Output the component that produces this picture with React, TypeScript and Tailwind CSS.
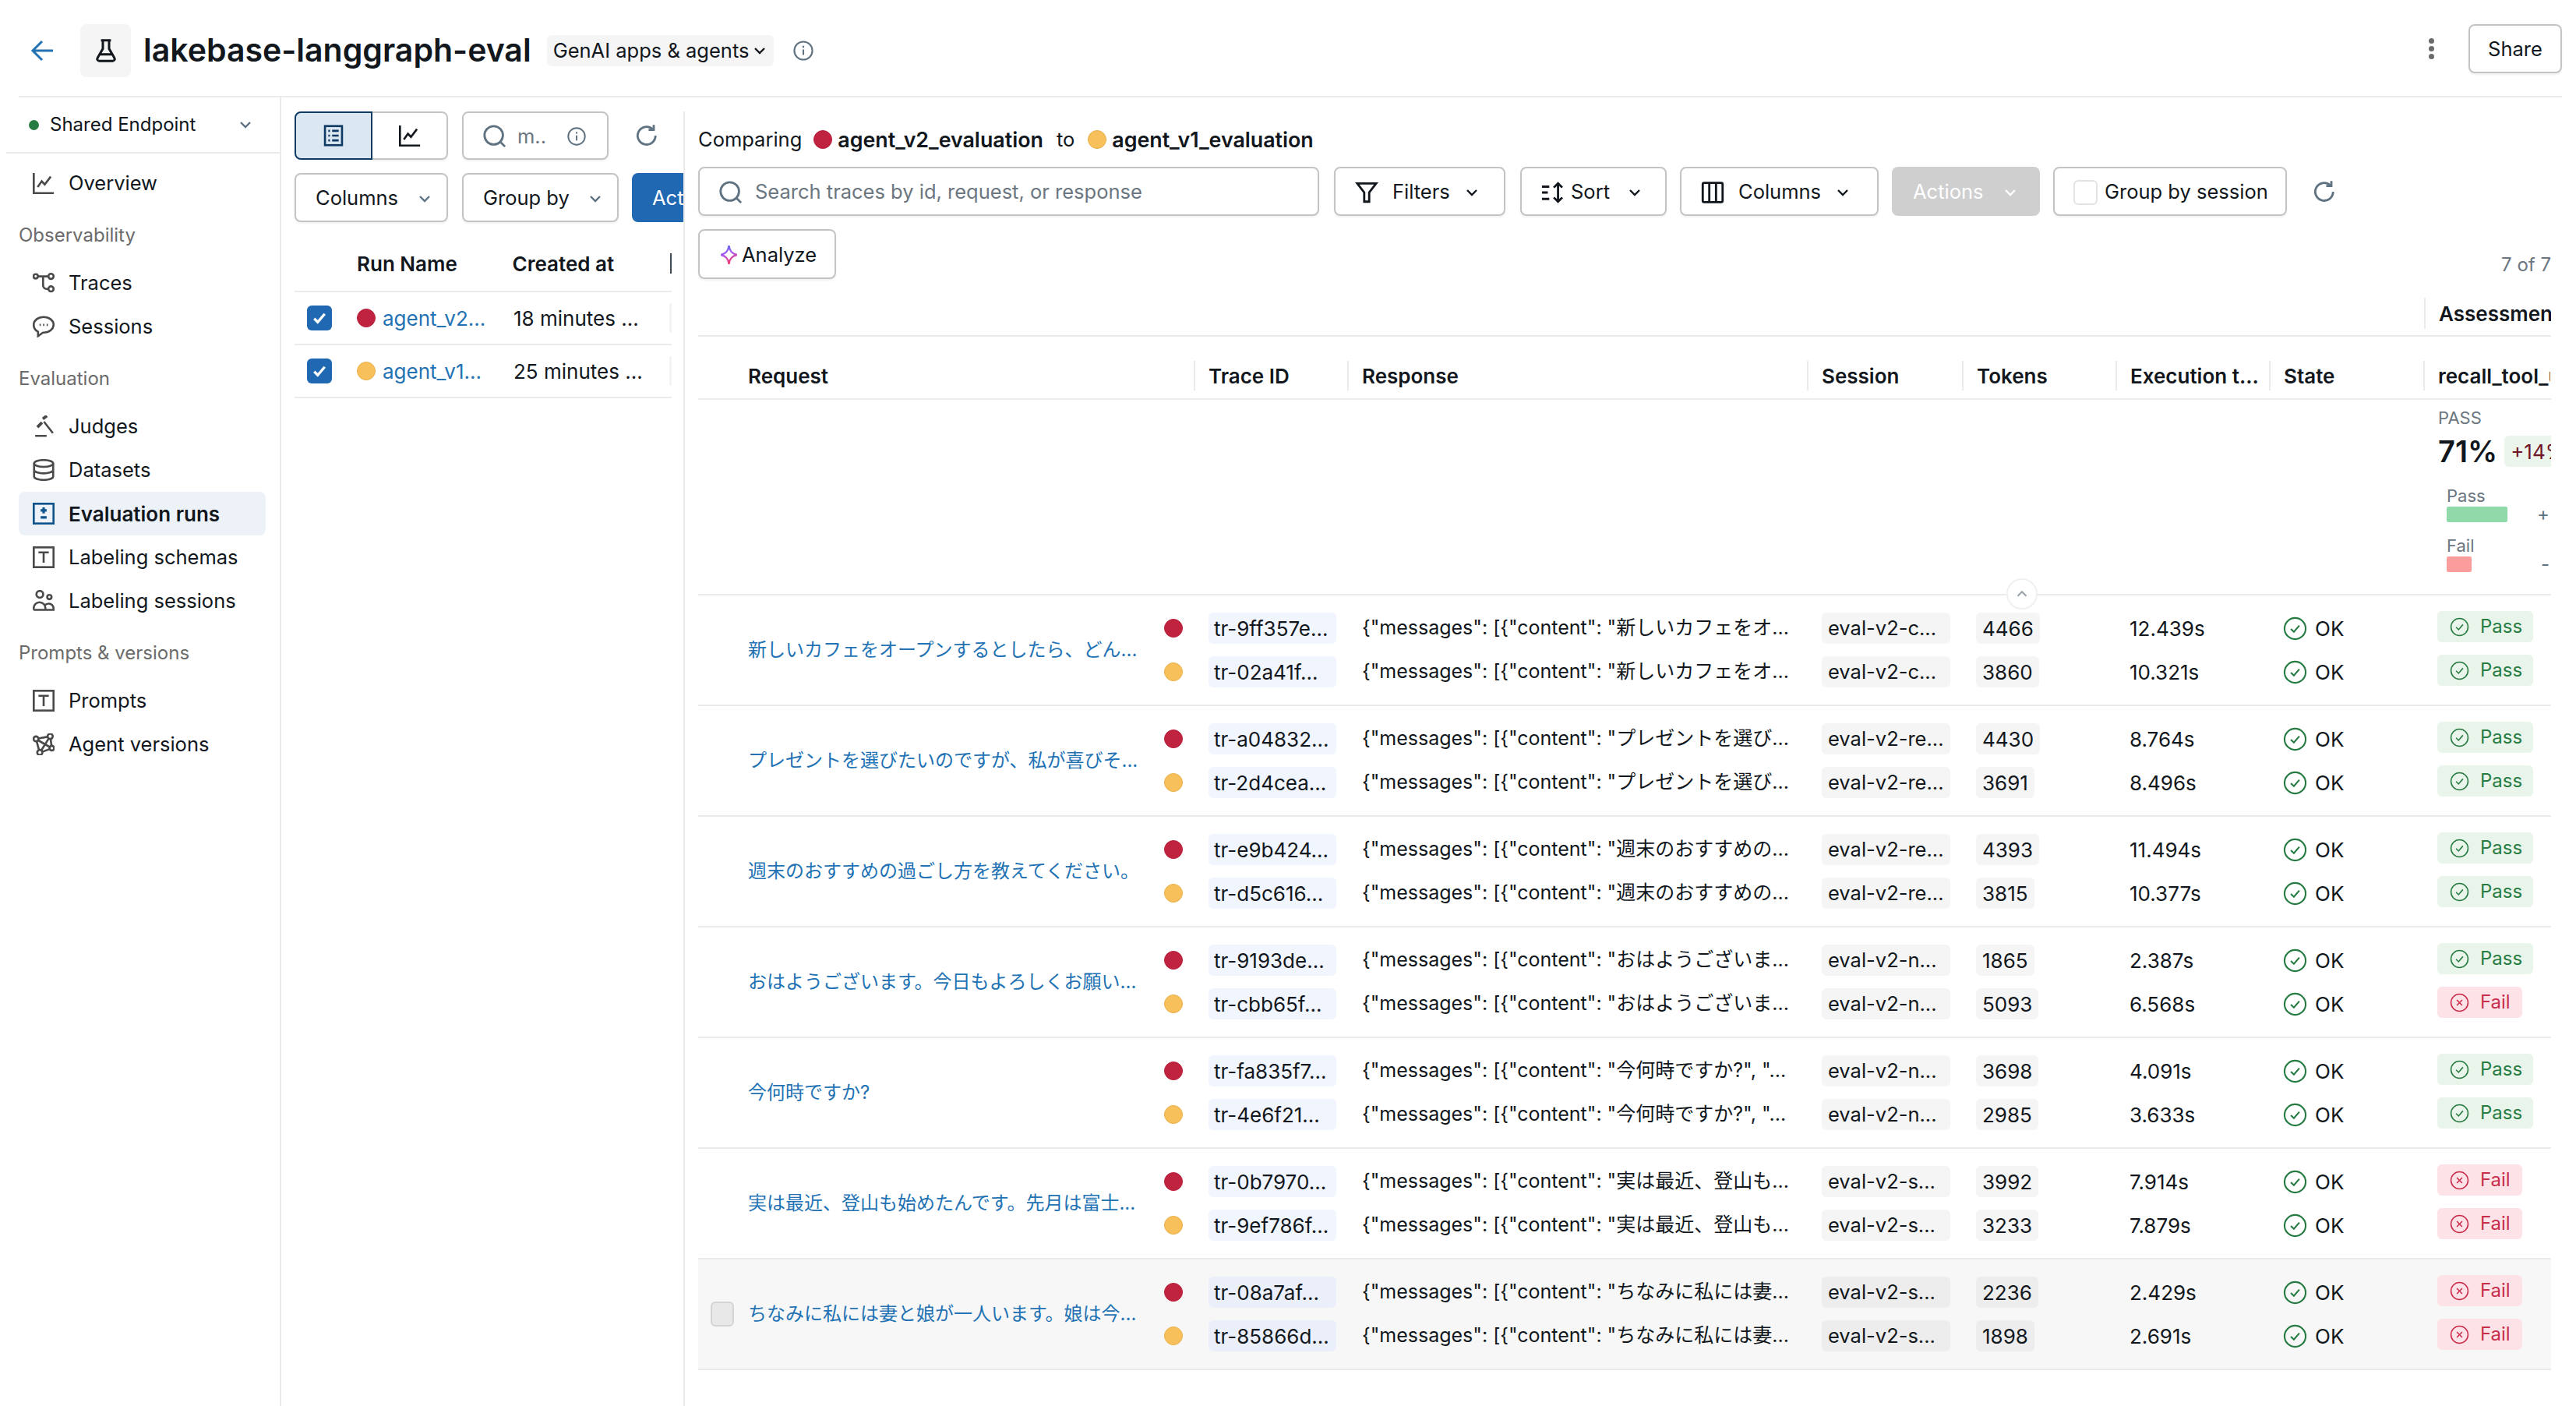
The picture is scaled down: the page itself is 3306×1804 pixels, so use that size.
import { ReactNode } from "react";

const RED = "bg-[#c0233f] border border-[#b81f3b]";
const YEL = "bg-[#f8c05a] border border-[#e9b04c]";

const Ic = ({ size = 28, className = "", sw = 1.5, children }: { size?: number; className?: string; sw?: number; children: ReactNode }) => (
  <svg width={size} height={size} viewBox="0 0 16 16" fill="none" stroke="currentColor" strokeWidth={sw} className={"shrink-0 " + className}>
    {children}
  </svg>
);

const Chevron = ({ className = "" }: { className?: string }) => (
  <Ic size={24} sw={1.6} className={className}><path d="M4 6l4 4 4-4" /></Ic>
);
const SearchI = ({ size = 28 }: { size?: number }) => (
  <Ic size={size} className="text-[#5f7281]"><circle cx="7.25" cy="7.25" r="6.3" /><path d="M11.6 11.6l3.4 3.4" /></Ic>
);
const Refresh = () => (
  <Ic size={30} className="text-[#5f7281]"><path d="M14 8a6.1 6.1 0 1 1-2-4.5" /><path d="M12.8 0.6v3.5H9.3" /></Ic>
);
const ChartI = ({ size = 28 }: { size?: number }) => (
  <Ic size={size}><path d="M.75 .5v14.75H15.5" /><path d="M3.6 10.8l3-4.2 2.2 2.4 4.4-5.8" /></Ic>
);
const TBox = () => (
  <Ic><rect x=".75" y=".75" width="14.5" height="14.5" /><path d="M4.2 4.4h7.6M8 4.4v7.6" /></Ic>
);

const navIcons: Record<string, ReactNode> = {
  Overview: <ChartI />,
  Traces: (
    <Ic>
      <circle cx="2.2" cy="3.2" r="1.6" /><circle cx="13.4" cy="3.2" r="1.9" /><circle cx="13.4" cy="12.4" r="1.9" />
      <path d="M3.8 3.2h7.7M7.6 3.2v6.7a2.5 2.5 0 0 0 2.5 2.5h1.4" />
    </Ic>
  ),
  Sessions: (
    <Ic>
      <path d="M8 1c4.1 0 7.3 2.5 7.3 5.7S12.1 12.4 8 12.4h-.5L3.9 15v-3.2C1.9 10.8.7 8.9.7 6.7.7 3.5 3.9 1 8 1z" />
      <path d="M5 6.8h.9M7.6 6.8h.9M10.2 6.8h.9" />
    </Ic>
  ),
  Judges: (
    <Ic>
      <path d="M3.4 8.6l3.4-3.4M7.4 2.6l3-2.3" strokeWidth="2.2" />
      <path d="M8.2 4.6l6.6 8.4M1.8 15h8.4" />
    </Ic>
  ),
  Datasets: (
    <Ic>
      <ellipse cx="8" cy="3.2" rx="7" ry="2.5" />
      <path d="M1 3.2v9.6c0 1.3 3.1 2.5 7 2.5s7-1.2 7-2.5V3.2M1 8c0 1.3 3.1 2.5 7 2.5s7-1.2 7-2.5" />
    </Ic>
  ),
  "Evaluation runs": (
    <Ic className="text-[#0e538b]">
      <rect x=".75" y=".75" width="14.5" height="14.5" />
      <path d="M8 3.4v4.4M5.8 5.6h4.4M5.8 10.8h4.4" strokeWidth="1.8" />
    </Ic>
  ),
  "Labeling schemas": <TBox />,
  "Labeling sessions": (
    <Ic>
      <circle cx="5.2" cy="3.2" r="2.5" /><circle cx="12.2" cy="5.2" r="1.6" />
      <path d="M.7 14.6v-1.2C.7 10.8 2.7 9 5 9s4.3 1.8 4.3 4.4v1.2M.7 14.6h14.6v-.9c0-2-1.5-3.7-3.5-3.7-.9 0-1.7.3-2.5.8" />
    </Ic>
  ),
  Prompts: <TBox />,
  "Agent versions": (
    <Ic>
      <circle cx="2.4" cy="4" r="1.8" /><circle cx="12.8" cy="2.2" r="1.9" /><circle cx="14" cy="10.8" r="1.7" /><circle cx="5.2" cy="14" r="1.9" />
      <path d="M4.1 3.7l6.8-1.2M2.9 5.8l1.7 6.4M11.7 3.8l-5.4 8.6M13.1 4.1l.7 5M3.9 5l8.6 5M12.4 11.5l-5.4 2" />
    </Ic>
  ),
};

const groups = [
  { label: "Observability", items: ["Traces", "Sessions"] },
  { label: "Evaluation", items: ["Judges", "Datasets", "Evaluation runs", "Labeling schemas", "Labeling sessions"] },
  { label: "Prompts & versions", items: ["Prompts", "Agent versions"] },
];

const NavItem = ({ name }: { name: string }) => {
  const active = name === "Evaluation runs";
  return (
    <div className={"ml-[24px] mr-[18px] h-[56px] pl-[18px] flex items-center gap-[18px] rounded-[8px] text-[#4a4a4a] " + (active ? "bg-[#edf2f8]" : "")}>
      {navIcons[name]}
      <span className={"text-[#11171c] " + (active ? "text-[26px] font-semibold" : "text-[25.5px]")}>{name}</span>
    </div>
  );
};

const Sidebar = () => (
  <aside className="w-[361px] shrink-0 border-r-2 border-[#ebebeb]">
    <div className="h-[72px] ml-[8px] border-b-2 border-[#ebebeb] pl-[29px] pr-[32px] flex items-center">
      <span className="w-[13px] h-[13px] rounded-full bg-[#277c43]" />
      <span className="ml-[14px] text-[24px] text-[#11171c] flex-1">Shared Endpoint</span>
      <Chevron className="text-[#5f7281]" />
    </div>
    <div className="mt-[10px]"><NavItem name="Overview" /></div>
    {groups.map((g) => (
      <div key={g.label} className="mt-[17px]">
        <div className="h-[44px] pl-[24px] flex items-center text-[24px] text-[#6b6b6b]">{g.label}</div>
        <div className="mt-[11px]">
          {g.items.map((n) => <NavItem key={n} name={n} />)}
        </div>
      </div>
    ))}
  </aside>
);

const btn = "shrink-0 h-[63px] pt-[2px] rounded-[8px] border-2 border-[#c4c4c4] shadow-[0_2px_3px_rgba(0,0,0,0.06)] bg-white flex items-center text-[25.5px] text-[#11171c]";

const RunRow = ({ color, name, at }: { color: string; name: string; at: string }) => (
  <div className="h-[68px] border-b-2 border-[#ebebeb] flex items-center">
    <div className="ml-[16px] w-[32px] h-[32px] rounded-[6px] bg-[#2068b2] flex items-center justify-center text-white">
      <Ic size={24} sw={2.2}><path d="M3.5 8.5l3 3 6-7" /></Ic>
    </div>
    <span className={"ml-[32px] w-[24px] h-[24px] rounded-full " + color} />
    <span className="ml-[9px] w-[168px] text-[26px] text-[#2272b4]">{name}</span>
    <span className="text-[26px] text-[#11171c]">{at}</span>
    <span className="ml-auto w-[3px] h-[38px] rounded-l-[3px] bg-[#f3f3f3]" />
  </div>
);

const RunsPanel = () => (
  <div className="w-[518px] shrink-0 mt-[18px] border-r-2 border-[#ebebeb] overflow-hidden pl-[17px]">
    <div className="flex items-center">
      <div className="flex w-[197px] h-[62px] shrink-0">
        <div className="w-[100px] rounded-l-[8px] border-2 border-[#0e3a64] bg-[#dbe7f1] flex items-center justify-center text-[#0e3a64]">
          <Ic>
            <rect x="1.75" y="1" width="12.5" height="14" />
            <path d="M4.2 4.5h1.2M7 4.5h4.8M4.2 8h1.2M7 8h4.8M4.2 11.5h1.2M7 11.5h4.8" />
          </Ic>
        </div>
        <div className="flex-1 rounded-r-[8px] border-2 border-l-0 border-[#c4c4c4] shadow-[0_2px_3px_rgba(0,0,0,0.06)] flex items-center justify-center text-[#11171c]">
          <ChartI />
        </div>
      </div>
      <div className={btn + " ml-[18px] w-[188px] !h-[62px] pl-[25px]"}>
        <SearchI size={30} />
        <span className="ml-[14px] text-[#6b7680]">m..</span>
        <Ic size={26} sw={1.2} className="ml-[26px] text-[#5f7281]"><circle cx="8" cy="8" r="6.6" /><path d="M8 7.2v4M8 4.4v1.4" /></Ic>
      </div>
      <div className="ml-[34px]"><Refresh /></div>
    </div>
    <div className="flex mt-[17px]">
      <div className={btn + " w-[197px] pl-[25px] justify-between pr-[16px]"}>Columns<Chevron className="text-[#5f7281]" /></div>
      <div className={btn + " ml-[18px] w-[201px] pl-[25px] justify-between pr-[16px]"}>Group by<Chevron className="text-[#5f7281]" /></div>
      <div className="ml-[17px] h-[63px] w-[120px] shrink-0 rounded-[8px] bg-[#2068b2] pl-[26px] pt-[2px] flex items-center text-[25.5px] text-white whitespace-nowrap">Actions</div>
    </div>
    <div className="w-[484px] h-[90px] border-b-2 border-[#ebebeb] flex items-center pt-[18px] text-[26px] font-semibold text-[#11171c]">
      <span className="ml-[80px] w-[200px]">Run Name</span>
      <span className="w-[203px]">Created at</span>
      <span className="w-[2px] h-[26px] bg-[#3f4a52]" />
    </div>
    <div className="w-[484px]">
      <RunRow color={RED} name="agent_v2..." at="18 minutes ..." />
      <RunRow color={YEL} name="agent_v1..." at="25 minutes ..." />
    </div>
  </div>
);

type Sub = { id: string; tokens: string; time: string; pass: boolean };
type Row = { request: string; response: string; session: string; hover?: boolean; subs: [Sub, Sub] };

const rows: Row[] = [
  { request: "新しいカフェをオープンするとしたら、どん...", response: '{"messages": [{"content": "新しいカフェをオ...', session: "eval-v2-c...", subs: [
    { id: "tr-9ff357e...", tokens: "4466", time: "12.439s", pass: true },
    { id: "tr-02a41f...", tokens: "3860", time: "10.321s", pass: true } ] },
  { request: "プレゼントを選びたいのですが、私が喜びそ...", response: '{"messages": [{"content": "プレゼントを選び...', session: "eval-v2-re...", subs: [
    { id: "tr-a04832...", tokens: "4430", time: "8.764s", pass: true },
    { id: "tr-2d4cea...", tokens: "3691", time: "8.496s", pass: true } ] },
  { request: "週末のおすすめの過ごし方を教えてください。", response: '{"messages": [{"content": "週末のおすすめの...', session: "eval-v2-re...", subs: [
    { id: "tr-e9b424...", tokens: "4393", time: "11.494s", pass: true },
    { id: "tr-d5c616...", tokens: "3815", time: "10.377s", pass: true } ] },
  { request: "おはようございます。今日もよろしくお願い...", response: '{"messages": [{"content": "おはようございま...', session: "eval-v2-n...", subs: [
    { id: "tr-9193de...", tokens: "1865", time: "2.387s", pass: true },
    { id: "tr-cbb65f...", tokens: "5093", time: "6.568s", pass: false } ] },
  { request: "今何時ですか?", response: '{"messages": [{"content": "今何時ですか?", "...', session: "eval-v2-n...", subs: [
    { id: "tr-fa835f7...", tokens: "3698", time: "4.091s", pass: true },
    { id: "tr-4e6f21...", tokens: "2985", time: "3.633s", pass: true } ] },
  { request: "実は最近、登山も始めたんです。先月は富士...", response: '{"messages": [{"content": "実は最近、登山も...', session: "eval-v2-s...", subs: [
    { id: "tr-0b7970...", tokens: "3992", time: "7.914s", pass: false },
    { id: "tr-9ef786f...", tokens: "3233", time: "7.879s", pass: false } ] },
  { request: "ちなみに私には妻と娘が一人います。娘は今...", response: '{"messages": [{"content": "ちなみに私には妻...', session: "eval-v2-s...", hover: true, subs: [
    { id: "tr-08a7af...", tokens: "2236", time: "2.429s", pass: false },
    { id: "tr-85866d...", tokens: "1898", time: "2.691s", pass: false } ] },
];

const headers = [
  { t: "Request", w: "w-[636px] pl-[64px]" },
  { t: "Trace ID", w: "w-[197px] pl-[17px] border-l-2" },
  { t: "Response", w: "w-[590px] pl-[17px] border-l-2" },
  { t: "Session", w: "w-[199px] pl-[17px] border-l-2" },
  { t: "Tokens", w: "w-[197px] pl-[17px] border-l-2" },
  { t: "Execution t...", w: "w-[197px] pl-[17px] border-l-2" },
  { t: "State", w: "w-[198px] pl-[17px] border-l-2" },
  { t: "recall_tool_use", w: "w-[163px] pl-[17px] border-l-2" },
];

const SubRow = ({ sub, color, row }: { sub: Sub; color: string; row: Row }) => (
  <div className="h-[40px] grid grid-cols-[57px_197px_590px_198px_197px_197px_198px_145px] items-center text-[26px] text-[#11171c]">
    <span className={"w-[24px] h-[24px] rounded-full " + color} />
    <span className={"w-[164px] h-[40px] rounded-[6px] pl-[7px] flex items-center " + (row.hover ? "bg-[#ebeffa]" : "bg-[#f1f5fd]")}>{sub.id}</span>
    <span className="whitespace-nowrap text-[25px]">{row.response}</span>
    <span className={"w-[165px] h-[40px] rounded-[6px] pl-[8px] flex items-center text-[25.5px] " + (row.hover ? "bg-[#ededed]" : "bg-[#f5f5f5]")}>{row.session}</span>
    <span className={"justify-self-start h-[40px] rounded-[6px] px-[8px] flex items-center " + (row.hover ? "bg-[#ededed]" : "bg-[#f5f5f5]")}>{sub.tokens}</span>
    <span>{sub.time}</span>
    <span className="flex items-center">
      <Ic size={31} sw={1.1} className="text-[#277c43]"><circle cx="8" cy="8" r="7" /><path d="M5.2 8.2l2 2 3.6-4.2" /></Ic>
      <span className="ml-[10px]">OK</span>
    </span>
    {sub.pass ? (
      <span className="w-[123px] h-[40px] -mt-[4px] rounded-[6px] bg-[#e9f5ea] text-[#277c43] pl-[16px] flex items-center text-[24px]">
        <Ic size={25} sw={1}><circle cx="8" cy="8" r="7" /><path d="M5.2 8.2l2 2 3.6-4.2" /></Ic>
        <span className="ml-[14px]">Pass</span>
      </span>
    ) : (
      <span className="w-[109px] h-[40px] -mt-[4px] rounded-[6px] bg-[#fde3e7] text-[#c82d4c] pl-[16px] flex items-center text-[24px]">
        <Ic size={25} sw={1}><circle cx="8" cy="8" r="7" /><path d="M5.8 5.8l4.4 4.4M10.2 5.8l-4.4 4.4" /></Ic>
        <span className="ml-[14px]">Fail</span>
      </span>
    )}
  </div>
);

const TableRow = ({ row }: { row: Row }) => (
  <div className={"h-[142px] border-b-2 border-[#ebebeb] flex items-center " + (row.hover ? "bg-[#f7f7f7]" : "")}>
    <div className="w-[598px] shrink-0 flex items-center">
      <span className={"ml-[16px] w-[30px] h-[32px] rounded-[6px] border-2 " + (row.hover ? "border-[#d4d4d4] bg-[#e8e8e8]" : "border-transparent")} />
      <span className="ml-[18px] text-[24px] text-[#2272b4] whitespace-nowrap">{row.request}</span>
    </div>
    <div className="flex flex-col gap-[16px]">
      <SubRow sub={row.subs[0]} color={RED} row={row} />
      <SubRow sub={row.subs[1]} color={YEL} row={row} />
    </div>
  </div>
);

const Summary = () => (
  <div className="relative h-[251px] border-b-2 border-[#ebebeb] flex justify-end">
    <div className="w-[163px] pl-[18px] pt-[10px] overflow-hidden">
      <div className="h-[26px] text-[22px] leading-[26px] text-[#6b7680]">PASS</div>
      <div className="flex items-center mt-[10px] h-[40px]">
        <span className="text-[38px] font-semibold text-[#11171c]">71%</span>
        <span className="ml-[9px] h-[40px] pl-[8px] w-[70px] shrink-0 rounded-[6px] bg-[#ecf5ec] text-[26px] text-[#6e1527] flex items-center">+14%</span>
      </div>
      <div className="ml-[11px] mt-[24px] pr-[2px]">
        <div className="text-[22px] leading-[26px] text-[#6b7680]">Pass</div>
        <div className="flex justify-between items-center h-[20px] mt-[1px]">
          <span className="w-[78px] h-[20px] rounded-[2px] bg-[#8fdaa8]" />
          <span className="text-[24px] text-[#5f7281]">+</span>
        </div>
        <div className="mt-[17px] text-[22px] leading-[26px] text-[#6b7680]">Fail</div>
        <div className="flex justify-between items-center h-[20px] mt-[1px]">
          <span className="w-[32px] h-[20px] rounded-[2px] bg-[#fb9d9d]" />
          <span className="text-[24px] text-[#5f7281]">-</span>
        </div>
      </div>
    </div>
    <div className="absolute left-[1679px] -bottom-[20px] w-[40px] h-[40px] rounded-full bg-white border-2 border-[#f0f0f0] flex items-center justify-center text-[#9aa5ad]">
      <Ic size={22} sw={1.6}><path d="M4 10l4-4 4 4" /></Ic>
    </div>
  </div>
);

const TracesPanel = () => (
  <div className="flex-1 min-w-0 pl-[17px] pr-[32px] pt-[36px]">
    <div className="h-[36px] flex items-center text-[25.5px] text-[#11171c] whitespace-nowrap">
      Comparing
      <span className={"ml-[15px] w-[24px] h-[24px] rounded-full " + RED} />
      <span className="ml-[7px] text-[26.8px] font-semibold">agent_v2_evaluation</span>
      <span className="ml-[17px]">to</span>
      <span className={"ml-[17px] w-[24px] h-[24px] rounded-full " + YEL} />
      <span className="ml-[7px] text-[26.8px] font-semibold">agent_v1_evaluation</span>
    </div>
    <div className="mt-[17px] flex items-center">
      <div className={btn + " w-[797px] pl-[25px]"}>
        <SearchI size={30} />
        <span className="ml-[16px] text-[#6b7680]">Search traces by id, request, or response</span>
      </div>
      <div className={btn + " ml-[19px] w-[220px] pl-[25px]"}>
        <Ic size={30}><path d="M1.5 1.75h13L9.7 8v6.25H6.3V8z" /></Ic>
        <span className="ml-[18px]">Filters</span>
        <Chevron className="ml-[16px] text-[#11171c]" />
      </div>
      <div className={btn + " ml-[19px] w-[188px] pl-[25px]"}>
        <Ic size={30}><path d="M.5 4h5M.5 8h4M.5 12.4h5M11.5 2v12M8.6 4.6l2.9-2.9 2.9 2.9M8.6 11.4l2.9 2.9 2.9-2.9" /></Ic>
        <span className="ml-[8px]">Sort</span>
        <Chevron className="ml-[20px] text-[#11171c]" />
      </div>
      <div className={btn + " ml-[17px] w-[255px] pl-[25px]"}>
        <Ic size={30}><rect x="1.2" y="1.4" width="13.6" height="13.2" rx="1" /><path d="M5.7 1.4v13.2M10.3 1.4v13.2" /></Ic>
        <span className="ml-[18px]">Columns</span>
        <Chevron className="ml-[16px] text-[#11171c]" />
      </div>
      <div className="ml-[17px] h-[63px] w-[190px] shrink-0 rounded-[8px] bg-[#cfcfcf] pl-[27px] pt-[2px] flex items-center text-[25.5px] text-white">
        Actions<Chevron className="ml-[22px]" />
      </div>
      <div className={btn + " ml-[17px] w-[300px] pl-[24px]"}>
        <span className="w-[31px] h-[32px] rounded-[6px] border-2 border-[#e3e3e3] bg-white" />
        <span className="ml-[9px]">Group by session</span>
      </div>
      <div className="ml-[33px] shrink-0"><Refresh /></div>
    </div>
    <div className="mt-[17px] h-[64px] flex items-end justify-between">
      <div className={btn + " !h-[64px] w-[177px] pl-[24px]"}>
        <svg width="27" height="30" viewBox="0 0 16 16" fill="none" stroke="url(#spark)" strokeWidth="1.4" className="shrink-0">
          <defs>
            <linearGradient id="spark" x1="0" y1="0" x2="0.3" y2="1">
              <stop offset="0" stopColor="#4f6fee" />
              <stop offset="0.5" stopColor="#a855f7" />
              <stop offset="1" stopColor="#f43f6e" />
            </linearGradient>
          </defs>
          <path d="M8 1c.5 4 2 6 6 7-4 1-5.5 3-6 7-.5-4-2-6-6-7 4-1 5.5-3 6-7z" />
        </svg>
        <span className="ml-[3px]">Analyze</span>
      </div>
      <span className="text-[24px] text-[#6b7680]">7 of 7</span>
    </div>
    <div className="h-[74px] border-b-2 border-[#ebebeb] flex justify-end items-end pb-[8px]">
      <div className="w-[163px] h-[40px] border-l-2 border-[#ebebeb] pl-[17px] flex items-center overflow-hidden whitespace-nowrap text-[26px] font-semibold text-[#11171c]">Assessments</div>
    </div>
    <div className="h-[81px] border-b-2 border-[#ebebeb] flex items-end pb-[10px]">
      {headers.map((h) => (
        <div key={h.t} className={"h-[38px] flex items-center overflow-hidden whitespace-nowrap border-[#ebebeb] text-[26px] font-semibold text-[#11171c] " + h.w}>{h.t}</div>
      ))}
    </div>
    <Summary />
    {rows.map((r, i) => <TableRow key={i} row={r} />)}
  </div>
);

const Header = () => (
  <header className="h-[125px] ml-[24px] mr-[18px] border-b-2 border-[#ebebeb] flex items-center pt-[7px] pl-[15px]">
    <Ic size={32} className="text-[#2272b4]"><path d="M14.5 8H1.8M7.5 2L1.5 8l6 6" /></Ic>
    <div className="ml-[32px] w-[65px] h-[68px] rounded-[8px] bg-[#f5f5f5] flex items-center justify-center text-[#11171c]">
      <Ic size={32}><path d="M4.8 1.4h6.4M6 1.4v5.4L2.6 12.6a1.3 1.3 0 0 0 1.1 2h8.6a1.3 1.3 0 0 0 1.1-2L10 6.8V1.4M4.3 10.4h7.4" /></Ic>
    </div>
    <h1 className="ml-[16px] text-[41px] font-semibold text-[#11171c] whitespace-nowrap">lakebase-langgraph-eval</h1>
    <div className="ml-[20px] h-[40px] pl-[8px] pr-[6px] rounded-[6px] bg-[#f5f5f5] flex items-center text-[25.5px] text-[#11171c]">
      GenAI apps &amp; agents<Chevron className="ml-[2px] text-[#11171c]" />
    </div>
    <Ic size={28} sw={1.2} className="ml-[24px] text-[#5f7281]"><circle cx="8" cy="8" r="6.6" /><path d="M8 7.2v4M8 4.4v1.4" /></Ic>
    <div className="ml-auto flex items-center gap-[3px] flex-col w-[8px] mr-[44px] -mt-[5px]">
      <span className="w-[7px] h-[7px] rounded-full bg-[#6b6b6b]" />
      <span className="w-[7px] h-[7px] rounded-full bg-[#6b6b6b]" />
      <span className="w-[7px] h-[7px] rounded-full bg-[#6b6b6b]" />
    </div>
    <div className={btn + " w-[120px] justify-center -mt-[5px]"}>Share</div>
  </header>
);

export default function App() {
  return (
    <div className="w-[3306px] h-[1804px] overflow-hidden bg-white flex flex-col font-['Inter','Noto_Sans_CJK_JP',sans-serif]">
      <Header />
      <div className="flex flex-1 min-h-0">
        <Sidebar />
        <RunsPanel />
        <TracesPanel />
      </div>
    </div>
  );
}
